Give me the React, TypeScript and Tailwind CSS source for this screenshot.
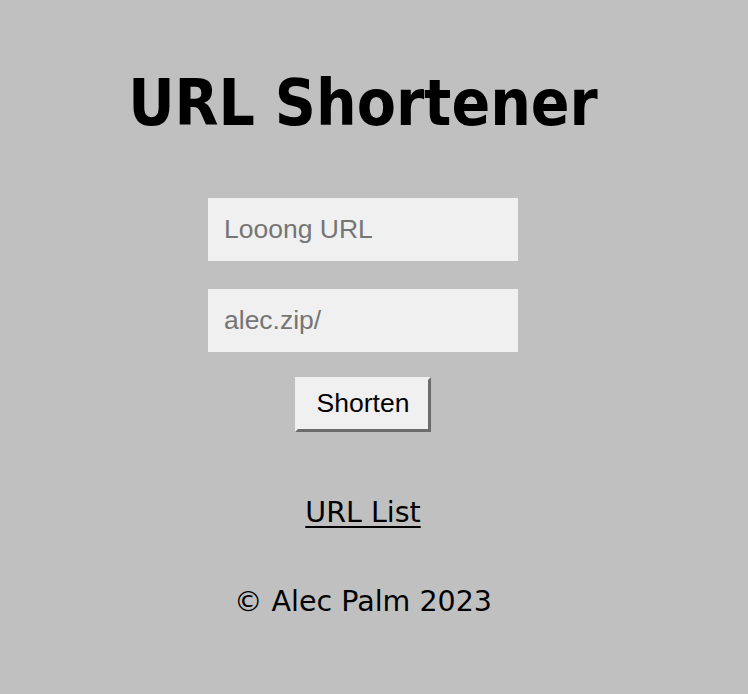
import React from "react";

function App() {
  return (
    <div className="min-h-screen w-full pr-[22px] bg-[#c0c0c0] flex flex-col items-center font-['DejaVu_Sans',sans-serif] text-black">
      <h1 className="mt-[72px] font-['DejaVu_Sans_Condensed','DejaVu_Sans',sans-serif] text-[63.5px] leading-none font-bold">
        URL Shortener
      </h1>

      <form action="!#" className="mt-[62px] flex flex-col items-center">
        <input
          type="text"
          placeholder="Looong URL"
          className="w-[310px] h-[63px] px-4 bg-[#f0f0f0] outline-none font-['Liberation_Sans',Arial,sans-serif] text-[26.5px] placeholder:text-[#757575]"
        />
        <input
          type="text"
          placeholder="alec.zip/"
          className="mt-[28px] w-[310px] h-[63px] px-4 bg-[#f0f0f0] outline-none font-['Liberation_Sans',Arial,sans-serif] text-[26.5px] placeholder:text-[#757575]"
        />
        <button
          type="submit"
          className="mt-[25px] w-[136px] h-[55px] bg-[#f0f0f0] border-[3px] border-t-[#f0f0f0] border-l-[#f0f0f0] border-r-[#6c6c6c] border-b-[#6c6c6c] font-['Liberation_Sans',Arial,sans-serif] text-[26.5px] text-black cursor-pointer"
        >
          Shorten
        </button>
      </form>

      <a href="#list" className="mt-[67px] text-[28.5px] leading-none underline decoration-2 underline-offset-[4px]">
        URL List
      </a>

      <footer className="mt-[61px] text-[28.5px] leading-none">© Alec Palm 2023</footer>
    </div>
  );
}

export default App;
